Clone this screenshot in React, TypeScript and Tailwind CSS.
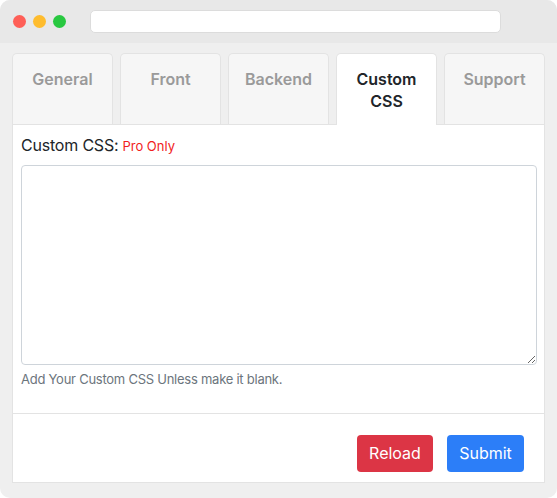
const tabs = ["General", "Front", "Backend", "Custom CSS", "Support"];

export default function App() {
  return (
    <div
      className="h-[498px] w-[557px] overflow-hidden rounded-[10px] bg-[#efefef]"
      style={{ fontFamily: "Inter, 'Liberation Sans', sans-serif" }}
    >
      {/* title bar */}
      <div className="flex h-[43px] items-center bg-[#e8e8e8] pl-[13px]">
        <div className="flex gap-[7px]">
          <span className="h-[13px] w-[13px] rounded-full bg-[#fe5f57]" />
          <span className="h-[13px] w-[13px] rounded-full bg-[#febc2e]" />
          <span className="h-[13px] w-[13px] rounded-full bg-[#28c840]" />
        </div>
        <div className="ml-[24px] h-[23px] w-[411px] rounded-[5px] border border-[#dcdcdc] bg-white" />
      </div>

      <div className="pl-[12px] pr-[12px] pt-[10px]">
        {/* tabs */}
        <div className="flex gap-[7px]">
          {tabs.map((t) => {
            const active = t === "Custom CSS";
            return (
              <div
                key={t}
                className={
                  active
                    ? "relative z-10 -mb-px flex h-[72px] flex-1 justify-center rounded-t-[5px] border border-b-0 border-[#e3e3e3] bg-white pt-[14px] text-center text-[16px] font-semibold leading-[22px] text-[#212529]"
                    : "flex h-[71px] flex-1 justify-center rounded-t-[5px] border border-b-0 border-[#e3e3e3] bg-[#f6f6f6] pt-[14px] text-center text-[16px] font-semibold leading-[22px] text-[#9a9a9a]"
                }
              >
                <span className={active ? "w-[60px]" : ""}>{t}</span>
              </div>
            );
          })}
        </div>

        {/* panel */}
        <div className="h-[359px] border border-[#e3e3e3] bg-white">
          <div className="px-[8px] pt-[10px]">
            <div className="flex items-baseline gap-[4px]">
              <span className="text-[16px] leading-[20px] tracking-[-0.2px] text-[#212529]">Custom CSS:</span>
              <span className="text-[13px] text-[#f11d1d]">Pro Only</span>
            </div>
            <textarea className="mt-[8px] block h-[200px] w-[516px] rounded-[4px] border border-[#ced4da] bg-white outline-none" />
            <p className="mt-[6px] text-[13px] leading-[16px] tracking-[-0.25px] text-[#6c757d]">
              Add Your Custom CSS Unless make it blank.
            </p>
          </div>
          <div className="mt-[26px] border-t border-[#e3e3e3]" />
          <div className="flex justify-end gap-[14px] pr-[20px] pt-[21px]">
            <button className="h-[37px] w-[76px] rounded-[4px] bg-[#dc3545] text-[16px] text-white">
              Reload
            </button>
            <button className="h-[37px] w-[77px] rounded-[4px] bg-[#2c7ef8] text-[16px] text-white">
              Submit
            </button>
          </div>
        </div>
      </div>
    </div>
  );
}
